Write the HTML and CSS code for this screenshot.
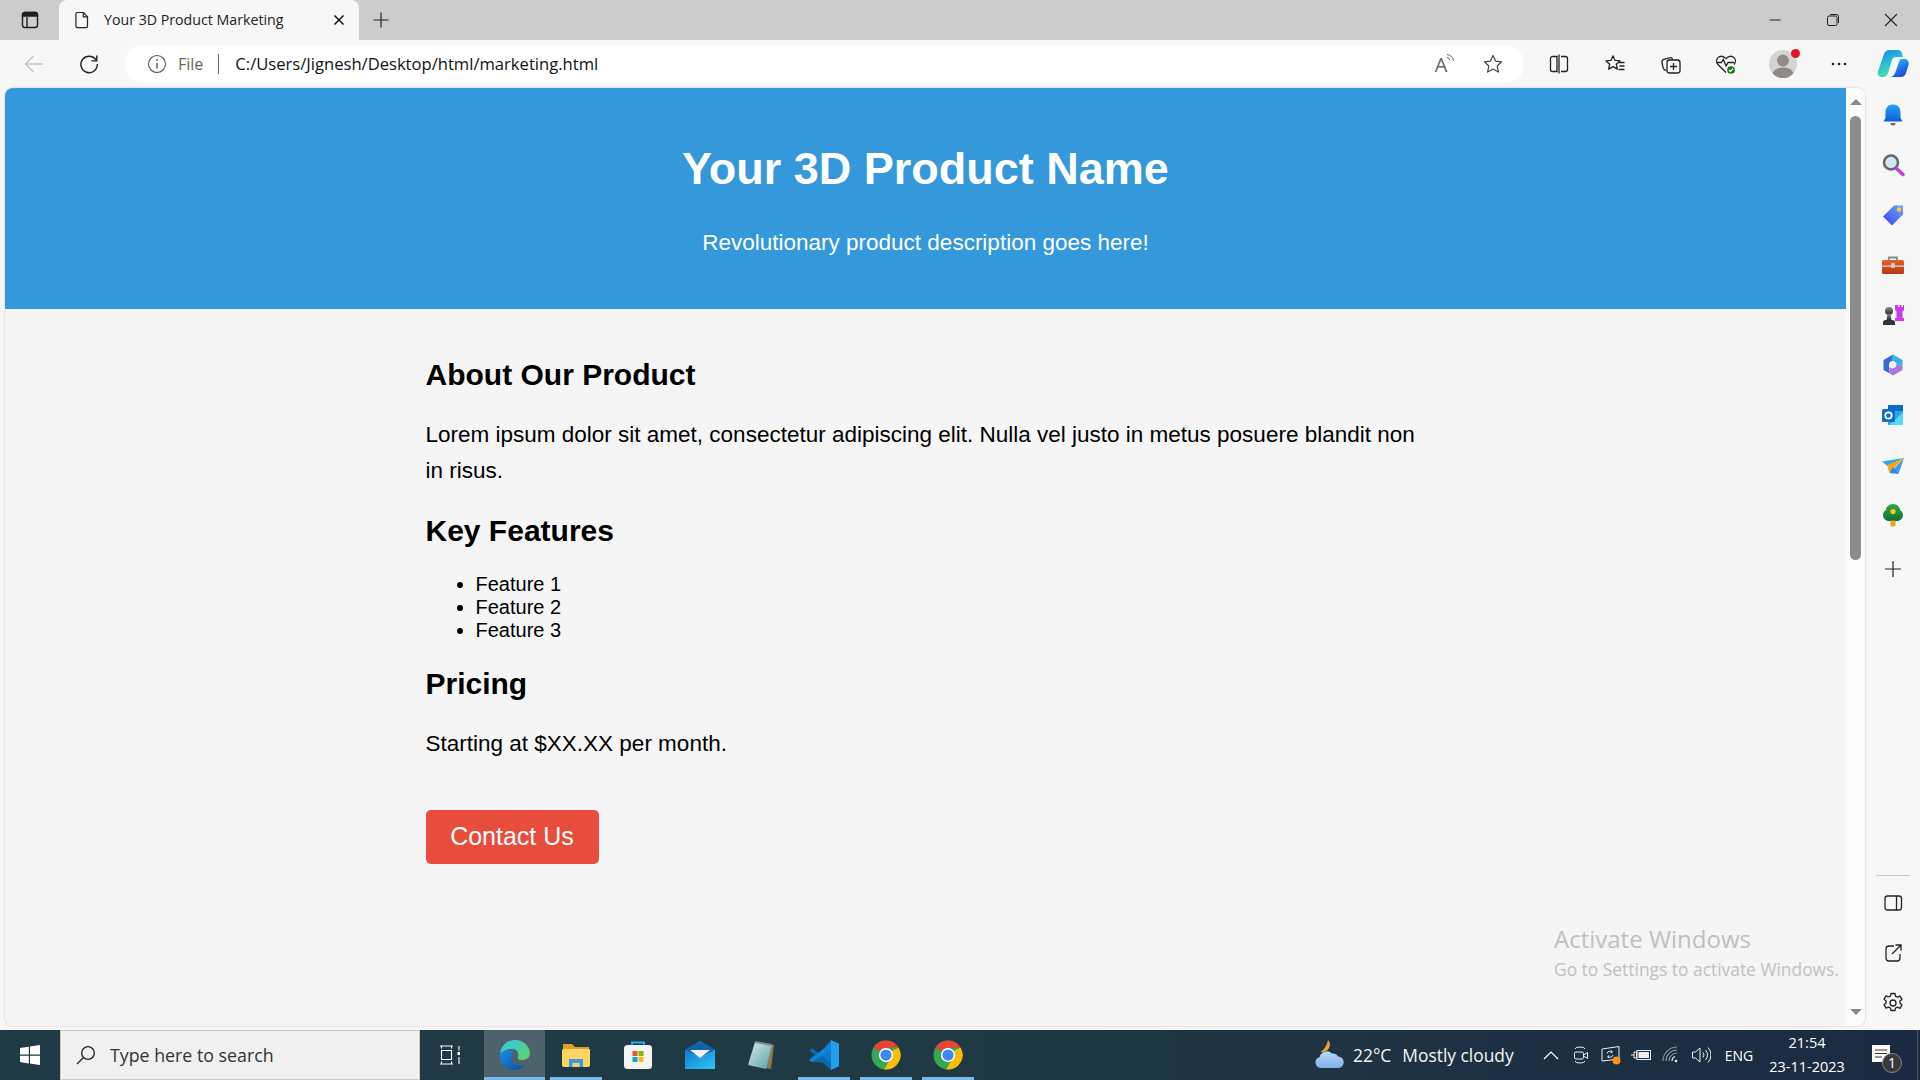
FILE: index.html
```html
<!DOCTYPE html>
<html lang="en">
<head>
<meta charset="utf-8">
<title>Your 3D Product Marketing</title>
<link rel="stylesheet" href="styles.css">
</head>
<body>
<svg class="defs" width="0" height="0" aria-hidden="true">
  <defs>
    <linearGradient id="bellG" x1="0" y1="0" x2="0" y2="1"><stop offset="0" stop-color="#2aa0f0"/><stop offset="1" stop-color="#0b5fd8"/></linearGradient>
    <linearGradient id="tagG" x1="0" y1="1" x2="1" y2="0"><stop offset="0" stop-color="#3a3ff0"/><stop offset="1" stop-color="#6aa8f8"/></linearGradient>
    <linearGradient id="boxG" x1="0" y1="0" x2="0" y2="1"><stop offset="0" stop-color="#e0622c"/><stop offset="1" stop-color="#b53a12"/></linearGradient>
    <linearGradient id="pawnG" x1="0" y1="0" x2="0" y2="1"><stop offset="0" stop-color="#8a8a8a"/><stop offset="1" stop-color="#2b2b2b"/></linearGradient>
    <linearGradient id="treeG" x1="0" y1="0" x2="0" y2="1"><stop offset="0" stop-color="#30a84a"/><stop offset="1" stop-color="#0f6e34"/></linearGradient>
    <linearGradient id="copA" x1="0" y1="0" x2="0.4" y2="1"><stop offset="0" stop-color="#1c80e8"/><stop offset=".55" stop-color="#28c0d8"/><stop offset="1" stop-color="#50e0a0"/></linearGradient>
    <linearGradient id="copB" x1="0.2" y1="0" x2="0.8" y2="1"><stop offset="0" stop-color="#30c8f0"/><stop offset=".6" stop-color="#1a70e8"/><stop offset="1" stop-color="#2040d0"/></linearGradient>
    <linearGradient id="edgeA" x1="0" y1="0" x2="1" y2="1"><stop offset="0" stop-color="#36c8e8"/><stop offset="1" stop-color="#5fd06a"/></linearGradient>
    <linearGradient id="edgeB" x1="0" y1="0" x2="1" y2="1"><stop offset="0" stop-color="#1b8ee0"/><stop offset="1" stop-color="#0c4ea0"/></linearGradient>
    <linearGradient id="mailG" x1="0" y1="0" x2="1" y2="1"><stop offset="0" stop-color="#0f78d0"/><stop offset="1" stop-color="#2ec8f4"/></linearGradient>
    <linearGradient id="noteG" x1="0" y1="0" x2="1" y2="1"><stop offset="0" stop-color="#d8ece8"/><stop offset="1" stop-color="#58a0a8"/></linearGradient>
    <linearGradient id="cloudG" x1="0" y1="0" x2="0" y2="1"><stop offset="0" stop-color="#b8d8f8"/><stop offset="1" stop-color="#7fb0e8"/></linearGradient>
  </defs>
</svg>
<div class="window">
  <header class="tabstrip">
    <span class="strip-btn">
      <svg class="ic20" viewBox="0 0 20 20" fill="none" stroke="#1f1f1f" stroke-width="1.4"><rect x="2.5" y="2.5" width="15" height="15" rx="2.5"/><path d="M7 7v10.5" /><path d="M2.5 6h15V5a2.5 2.5 0 0 0-2.5-2.5H5A2.5 2.5 0 0 0 2.5 5z" fill="#1f1f1f"/></svg>
    </span>
    <div class="tab">
      <svg class="ic20" viewBox="0 0 20 20" fill="none" stroke="#222" stroke-width="1.2"><path d="M5.5 2.5h6l4 4.2v9.3a1.6 1.6 0 0 1-1.6 1.6H5.5A1.6 1.6 0 0 1 3.9 16V4.100A1.600 1.600 0 0 1 5.500 2.500z"/><path d="M11.300 2.700v4.200h4.200"/></svg>
      <span class="tab-title">Your 3D Product Marketing</span>
      <svg class="tab-close" viewBox="0 0 12 12" fill="none" stroke="#111" stroke-width="1.5"><path d="M1.500 1.500l9 9M10.500 1.500l-9 9"/></svg>
    </div>
    <span class="new-tab">
      <svg class="ic18" viewBox="0 0 18 18" fill="none" stroke="#222" stroke-width="1.2"><path d="M9 1.500v15M1.500 9h15"/></svg>
    </span>
    <div class="win-controls">
      <span class="win-btn"><svg class="ic14" viewBox="0 0 14 14" fill="none" stroke="#222" stroke-width="1"><path d="M1.500 7h11"/></svg></span>
      <span class="win-btn"><svg class="ic14" viewBox="0 0 14 14" fill="none" stroke="#222" stroke-width="1"><rect x="1.500" y="3" width="9.500" height="9.500" rx="1.500"/><path d="M4 1.500h6.500a2 2 0 0 1 2 2V10"/></svg></span>
      <span class="win-btn"><svg class="ic14" viewBox="0 0 14 14" fill="none" stroke="#222" stroke-width="1.100"><path d="M1 1l12 12M13 1L1 13"/></svg></span>
    </div>
  </header>

  <nav class="toolbar">
    <span class="nav-btn">
      <svg class="ic22" viewBox="0 0 22 22" fill="none" stroke="#c4c4c4" stroke-width="1.400"><path d="M20 11H2.500M10.500 3L2.500 11l8 8"/></svg>
    </span>
    <span class="nav-btn">
      <svg class="ic22" viewBox="0 0 22 22" fill="none" stroke="#222" stroke-width="1.400"><path d="M18.300 7.500A8.200 8.200 0 1 0 19.300 11"/><path d="M18.800 2.500v5.400h-5.400"/></svg>
    </span>
    <div class="address">
      <svg class="ic20" viewBox="0 0 20 20" fill="none" stroke="#555" stroke-width="1.100"><circle cx="10" cy="10" r="8.500"/><path d="M10 9v5.500" stroke-width="1.400"/><circle cx="10" cy="6" r=".9" fill="#555" stroke="none"/></svg>
      <span class="addr-file">File</span>
      <span class="addr-sep"></span>
      <span class="addr-url">C:/Users/Jignesh/Desktop/html/marketing.html</span>
      <span class="addr-end">
        <span class="addr-action"><span class="read-a">A</span><svg class="read-waves" viewBox="0 0 10 12" fill="none" stroke="#666" stroke-width="1"><path d="M1 4.500a3.500 3.500 0 0 1 3 3M1 1.500a7 7 0 0 1 6.500 6.500"/></svg></span>
        <span class="addr-action"><svg class="ic22" viewBox="0 0 22 22" fill="none" stroke="#444" stroke-width="1.200"><path d="M11 2.500l2.600 5.600 6 .7-4.400 4.200 1.200 6.100L11 16.100l-5.400 3 1.200-6.100L2.400 8.800l6-.7z" stroke-linejoin="round"/></svg></span>
      </span>
    </div>
    <div class="tool-right">
      <span class="tool"><svg class="ic22" viewBox="0 0 22 22" fill="none" stroke="#222" stroke-width="1.300"><path d="M9 3.500H4.500a2 2 0 0 0-2 2v11a2 2 0 0 0 2 2H9zM13 3.500h4.500a2 2 0 0 1 2 2v11a2 2 0 0 1-2 2H13M11 1.500v19"/></svg></span>
      <span class="tool"><svg class="ic22" viewBox="0 0 22 22" fill="none" stroke="#222" stroke-width="1.300"><path d="M9 2.800l2 4.600 5 .5-3.700 3.300 1.100 4.900L9 13.600l-4.400 2.500 1.100-4.900L2 7.900l5-.5z" stroke-linejoin="round"/><path d="M15 9.500h5.500M15.500 13h5M14.500 16.500h6"/></svg></span>
      <span class="tool"><svg class="ic22" viewBox="0 0 22 22" fill="none" stroke="#222" stroke-width="1.300"><rect x="7" y="7" width="13" height="13" rx="2.500"/><path d="M13.500 10v7M10 13.500h7M6 17.500c-1.600-.4-2.500-1.400-2.900-2.900L2 9.500C1.700 8 2.500 6.700 4 6.300l5.500-1.500c1.300-.3 2.600.3 3.200 1.800"/></svg></span>
      <span class="tool"><svg class="ic24" viewBox="0 0 24 24" fill="none" stroke="#222" stroke-width="1.300"><path d="M12 20.500l-8-8C2.200 10.500 2 7.500 4 5.600c2.300-1.900 5.500-1.500 8 1 2.500-2.500 5.700-2.900 8-1 2 1.900 1.800 4.900 0 6.900"/><path d="M2.500 10.500h5l1.800-3 2.800 6.500 2-3.500h6"/><circle cx="17" cy="18" r="4.500" fill="#107c10" stroke="#f7f7f7"/><path d="M15 18l1.500 1.500 2.500-2.800" stroke="#fff"/></svg></span>
      <span class="tool">
        <span class="avatar">
          <svg class="ic28" viewBox="0 0 28 28"><circle cx="14" cy="14" r="14" fill="#d6d4d1"/><circle cx="14" cy="10.500" r="6" fill="#8e8b88"/><path d="M3.600 23.500C5 19 9 17.500 14 17.500s9 1.500 10.400 6A14 14 0 0 1 3.600 23.500z" fill="#8e8b88"/></svg>
          <span class="avatar-dot"></span>
        </span>
      </span>
      <span class="tool"><svg class="ic18" viewBox="0 0 18 18" fill="#222"><circle cx="3" cy="9" r="1.300"/><circle cx="9" cy="9" r="1.300"/><circle cx="15" cy="9" r="1.300"/></svg></span>
      <span class="tool"><svg class="ic32" viewBox="0 0 32 32"><path d="M12 2h9c2 0 3 1 3.600 2.600L26 9h-7c-2 0-3.400 1-4 3l-4 13c-.6 2-2 4-5 4H5c-3 0-5-2.500-4-5.500L7 6c1-2.500 3-4 5-4z" fill="url(#copA)"/><path d="M13 29h11c2.500 0 4-1.400 4.800-3.500L31.500 17c1-3-1-6-4-6H23l-4.500 13c-.6 2-2.500 5-5.500 5z" fill="url(#copB)"/></svg></span>
    </div>
  </nav>

  <div class="workspace">
    <div class="panel">
      <div class="page">
        <section class="hero">
          <h1 class="hero-title">Your 3D Product Name</h1>
          <p class="hero-sub">Revolutionary product description goes here!</p>
        </section>
        <main class="content">
          <h2 class="heading">About Our Product</h2>
          <p class="para">Lorem ipsum dolor sit amet, consectetur adipiscing elit. Nulla vel justo in metus posuere blandit non in risus.</p>
          <h2 class="heading">Key Features</h2>
          <ul class="features">
            <li>Feature 1</li>
            <li>Feature 2</li>
            <li>Feature 3</li>
          </ul>
          <h2 class="heading">Pricing</h2>
          <p class="para">Starting at $XX.XX per month.</p>
          <a class="cta">Contact Us</a>
        </main>
        <div class="watermark">
          <div class="wm-title">Activate Windows</div>
          <div class="wm-sub">Go to Settings to activate Windows.</div>
        </div>
      </div>
      <div class="scrollbar">
        <span class="arrow-up"></span>
        <span class="thumb"></span>
        <span class="arrow-down"></span>
      </div>
    </div>
    <aside class="sidebar">
      <span class="side-ic"><svg class="ic24" viewBox="0 0 24 24"><path d="M12 1.500c-5 0-7.500 3.300-7.500 8v5.500L2.500 18.500h19L19.500 15V9.500c0-4.700-2.500-8-7.500-8z" fill="url(#bellG)"/><path d="M9.500 20h5a2.500 2.500 0 0 1-5 0z" fill="#666"/></svg></span>
      <span class="side-ic"><svg class="ic24" viewBox="0 0 24 24" fill="none"><circle cx="10" cy="9.500" r="7" fill="#cfe6f8" stroke="#666" stroke-width="2.600"/><path d="M15.500 15.500l6.500 6" stroke="#c83cf0" stroke-width="3.400" stroke-linecap="round"/></svg></span>
      <span class="side-ic"><svg class="ic24" viewBox="0 0 24 24"><path d="M13 2.500h9v9L11 22.500 2 13.500z" fill="url(#tagG)"/><circle cx="18" cy="6.500" r="2.200" fill="#ffc83d"/></svg></span>
      <span class="side-ic"><svg class="ic24" viewBox="0 0 24 24"><path d="M8 7V4.500h8V7" fill="none" stroke="#888" stroke-width="1.800"/><rect x="1" y="7" width="22" height="14" rx="1.500" fill="url(#boxG)"/><rect x="1" y="12.500" width="22" height="1.200" fill="#f4d8c8"/><rect x="10" y="10" width="4" height="5" rx="1" fill="#ccc"/></svg></span>
      <span class="side-ic"><svg class="ic24" viewBox="0 0 24 24"><path d="M15 2h2v2h1.500V2h2v2H22V2h1v5l-1.500 1.500V15H23v3h-9v-3h1.500V8.500L14 7V2z" fill="#c83cf0"/><circle cx="8" cy="8" r="4" fill="url(#pawnG)"/><path d="M6.500 11h3l1 6h-5z" fill="url(#pawnG)"/><path d="M2 22v-2.500c0-1.500 1-2.500 2.500-2.500h7c1.500 0 2.500 1 2.500 2.500V22z" fill="#333"/></svg></span>
      <span class="side-ic"><svg class="ic24" viewBox="0 0 24 24"><path d="M12 1.500L21.500 7v6l-6-1.500A4 4 0 0 0 11 8z" fill="#38b0e8"/><path d="M12 1.500L2.500 7v10L8 20v-8a4 4 0 0 1 3-4z" fill="#3a68d8"/><path d="M21.500 13v4L12 22.500 8 20l.5-6a4 4 0 0 0 7-2.500z" fill="#a878dc"/></svg></span>
      <span class="side-ic"><svg class="ic24" viewBox="0 0 24 24"><path d="M7 2h15v20H7z" fill="#28a8ea"/><path d="M7 2h15v6H7z" fill="#0a6cc4"/><path d="M22 9.500V22H8z" fill="#50d9ff"/><rect x="1" y="6" width="13" height="13" rx="1.500" fill="#0f6cc8"/><circle cx="7.500" cy="12.500" r="3.200" fill="none" stroke="#fff" stroke-width="1.800"/></svg></span>
      <span class="side-ic"><svg class="ic24" viewBox="0 0 24 24"><path d="M1 8.500L23 5 9 15z" fill="#28a8ea"/><path d="M23 5l-5.500 16-5-4.500z" fill="#3c9cf0"/><path d="M6 12L23 5 8.500 20z" fill="#f5a623"/><path d="M8.500 20l3.500-6 5.500 7z" fill="#2b88e0"/></svg></span>
      <span class="side-ic"><svg class="ic24" viewBox="0 0 24 24"><path d="M12 1c-4 0-7 3-7 6-2 1-3 3-3 5 0 3.500 3 6 6 6h8c3 0 6-2.500 6-6 0-2-1-4-3-5 0-3-3-6-7-6z" fill="url(#treeG)"/><rect x="9.500" y="17.500" width="5" height="6" rx="1" fill="#e8a020"/><circle cx="12" cy="8.500" r="2.600" fill="#f8c820"/></svg></span>
      <span class="side-ic side-add"><svg class="ic18" viewBox="0 0 18 18" fill="none" stroke="#222" stroke-width="1.200"><path d="M9 1v16M1 9h16"/></svg></span>
      <span class="side-spacer"></span>
      <span class="side-rule"></span>
      <span class="side-ic"><svg class="ic20" viewBox="0 0 20 20" fill="none" stroke="#222" stroke-width="1.300"><rect x="2" y="3" width="16.500" height="14" rx="2.500"/><path d="M13.500 3v14"/></svg></span>
      <span class="side-ic"><svg class="ic20" viewBox="0 0 20 20" fill="none" stroke="#222" stroke-width="1.300"><path d="M11 3H6a3 3 0 0 0-3 3v9a3 3 0 0 0 3 3h8a3 3 0 0 0 3-3v-4"/><path d="M9 11l9-9M12.500 2H18v5.500"/></svg></span>
      <span class="side-ic"><svg class="ic22" viewBox="0 0 22 22" fill="none" stroke="#222" stroke-width="1.300"><circle cx="11" cy="11" r="3"/><path d="M9 1.500h4l.6 2.800 1.900.9 2.500-1.200 2 3.400-2.100 1.700v2l2.100 1.800-2 3.400-2.500-1.200-1.900.9-.6 2.500H9l-.6-2.500-1.900-.9L4 16.100l-2-3.400 2.100-1.800v-2L2 7.200l2-3.400 2.500 1.200 1.900-.9z" stroke-linejoin="round"/></svg></span>
    </aside>
  </div>

  <footer class="taskbar">
    <span class="start"><svg class="ic20" viewBox="0 0 20 20" fill="#fff"><path d="M0 3l8.800-1.300v7.800H0zM10 1.500L20 0v9.500H10zM0 10.700h8.800v7.700L0 17zM10 10.700h10V20l-10-1.500z"/></svg></span>
    <div class="search">
      <svg class="ic20" viewBox="0 0 20 20" fill="none" stroke="#222" stroke-width="1.300"><circle cx="12" cy="8" r="6.300"/><path d="M7.500 12.500L1 19"/></svg>
      <span class="search-text">Type here to search</span>
    </div>
    <span class="task-view"><svg class="ic20" viewBox="0 0 20 20" fill="none" stroke="#fff" stroke-width="1.100"><path d="M0 1h13M0 19h13M1.500 5.500h10v9h-10zM1.500 1v2.500M11.500 1v2.500M1.500 16.500V19M11.500 16.500V19"/><path d="M19 1v4.500M19 12v7"/><rect x="17.500" y="7" width="3" height="3" fill="#fff" stroke="none"/></svg></span>
    <span class="app app-active on">
      <svg class="ic32" viewBox="0 0 32 32"><path d="M1 15C2 7 8 1 16 1c9 0 15 7 15 13 0 5-4 7-8 7-3 0-5-1-4-3 1-3 0-8-6-8-6 0-10 3-12 5z" fill="url(#edgeA)"/><path d="M1 15c-1 8 5 16 14 16 5 0 9-2 12-5-4 1-10 1-13-3-3-4-1-10 2-11-7-2-13 0-15 3z" fill="url(#edgeB)"/></svg>
    </span>
    <span class="app on">
      <svg class="ic30" viewBox="0 0 30 30"><path d="M2 4h9l3 3h14v6H2z" fill="#dda020"/><path d="M2 9h26a1 1 0 0 1 1 1v15a2 2 0 0 1-2 2H3a2 2 0 0 1-2-2V10z" fill="#fcd565"/><path d="M8 27v-8h14v8h-3.500v-4h-7v4z" fill="#3c98e0"/></svg>
    </span>
    <span class="app">
      <svg class="ic30" viewBox="0 0 30 30"><path d="M9 6V2.500h12V6" fill="none" stroke="#30b0f0" stroke-width="1.800"/><rect x="1" y="5" width="28" height="24" rx="3.500" fill="#f4f4f4"/><rect x="9.500" y="11" width="5" height="5" fill="#f25022"/><rect x="15.500" y="11" width="5" height="5" fill="#7fba00"/><rect x="9.500" y="17" width="5" height="5" fill="#00a4ef"/><rect x="15.500" y="17" width="5" height="5" fill="#ffb900"/></svg>
    </span>
    <span class="app">
      <svg class="ic30" viewBox="0 0 30 30"><path d="M15 1l15 9v19H0V10z" fill="url(#mailG)"/><path d="M15 1l15 9-15 7-15-7z" fill="#0e62b0"/><path d="M5 10h20l-10 8z" fill="#f4f4f4"/><path d="M0 10l15 10 15-10v19H0z" fill="url(#mailG)"/></svg>
    </span>
    <span class="app">
      <svg class="ic30" viewBox="0 0 30 30"><path d="M10 2l17 3-3 24-5-1z" fill="#8a7a50"/><path d="M8 2l17 3-6 24-18-4z" fill="url(#noteG)"/><path d="M8 2l17 3" stroke="#888" stroke-width="2"/></svg>
    </span>
    <span class="app on">
      <svg class="ic32" viewBox="0 0 32 32"><path d="M23 1l8 4v22l-8 4-14-13z" fill="#0c78c8"/><path d="M23 1v30l8-4V5z" fill="#24a0ea"/><path d="M1 11l3-2 19 15v7l-8-7.500L4 23l-3-2 6-5z" fill="#0a68b0"/><path d="M1 21l22-17v7L4 23z" fill="#0f84d8"/></svg>
    </span>
    <span class="app on">
      <svg class="ic30" viewBox="0 0 32 32"><circle cx="16" cy="16" r="15.500" fill="#34a853"/><path d="M16 .5A15.500 15.500 0 0 1 29.400 8.200H16a7.800 7.800 0 0 0-7 4.400L3 8A15.500 15.500 0 0 1 16 .5z" fill="#ea4335"/><path d="M29.400 8.200A15.500 15.500 0 0 1 14 31.400l6.600-11.500A7.800 7.800 0 0 0 22 11.800z" fill="#fbbc05"/><circle cx="16" cy="16" r="7.600" fill="#fff"/><circle cx="16" cy="16" r="6" fill="#4285f4"/></svg>
    </span>
    <span class="app on">
      <svg class="ic30" viewBox="0 0 32 32"><circle cx="16" cy="16" r="15.500" fill="#34a853"/><path d="M16 .5A15.500 15.500 0 0 1 29.400 8.200H16a7.800 7.800 0 0 0-7 4.400L3 8A15.500 15.500 0 0 1 16 .5z" fill="#ea4335"/><path d="M29.400 8.200A15.500 15.500 0 0 1 14 31.400l6.600-11.500A7.800 7.800 0 0 0 22 11.800z" fill="#fbbc05"/><circle cx="16" cy="16" r="7.600" fill="#fff"/><circle cx="16" cy="16" r="6" fill="#4285f4"/></svg>
    </span>
    <div class="weather">
      <svg class="ic32" viewBox="0 0 32 32"><path d="M14 1a7 7 0 0 1 1 8 7 7 0 0 1-9 3.500C9 12 12.500 8 14 1z" fill="#f0a030"/><path d="M7 29a5.500 5.500 0 0 1-1.500-10.800A7.500 7.500 0 0 1 18 14.500a6 6 0 0 1 6 3 5.800 5.800 0 0 1 1 11.500z" fill="url(#cloudG)"/></svg>
      <span class="weather-temp">22°C</span>
      <span class="weather-text">Mostly cloudy</span>
    </div>
    <span class="tray"><svg class="ic18" viewBox="0 0 18 18" fill="none" stroke="#fff" stroke-width="1.200"><path d="M2 13l7-7 7 7"/></svg></span>
    <span class="tray"><svg class="ic18" viewBox="0 0 18 18" fill="none" stroke="#eee" stroke-width="1"><path d="M3 3q0-2 5-2t5 2M3 15q0 2 5 2t5-2"/><rect x="2.500" y="6" width="9" height="7" rx="1.500"/><path d="M11.500 9l4-2.500v6l-4-2.500"/></svg></span>
    <span class="tray"><svg class="ic20" viewBox="0 0 20 20" fill="none" stroke="#eee" stroke-width="1"><path d="M1 4l17-2.500V14L1 16z"/><path d="M6 8.500a3 3 0 0 1 5-1.500M12 10a3 3 0 0 1-5 1.500M10.500 5.500l.8 1.700-1.800.5M7.500 13l-.8-1.700 1.800-.5"/><circle cx="15.500" cy="15.500" r="4" fill="#f7931e" stroke="none"/></svg></span>
    <span class="tray"><svg class="ic20" viewBox="0 0 20 20" fill="none" stroke="#eee" stroke-width="1"><path d="M0 10h3M3 7h2.500v6H3zM5.500 8.500h1"/><rect x="6" y="5.500" width="13.500" height="9"/><rect x="7.500" y="7" width="10.500" height="6" fill="#eee" stroke="none"/></svg></span>
    <span class="tray"><svg class="ic18" viewBox="0 0 18 18" fill="none" stroke="#8b96a3" stroke-width="1.100"><path d="M1 15a14 14 0 0 1 14-14M4 15a11 11 0 0 1 11-11M7 15a8 8 0 0 1 8-8" /><path d="M10 15a5 5 0 0 1 3-4.500" stroke="#eee"/><circle cx="14" cy="15" r="1.300" fill="#eee" stroke="none"/></svg></span>
    <span class="tray"><svg class="ic20" viewBox="0 0 20 20" fill="none" stroke="#eee" stroke-width="1"><path d="M1.500 7v6h3l4.500 4V3L4.500 7z"/><path d="M12 7.500a4 4 0 0 1 0 5M14.500 5a7.500 7.500 0 0 1 0 10M17 2.500a11 11 0 0 1 0 15"/></svg></span>
    <span class="lang">ENG</span>
    <span class="clock"><span>21:54</span><span>23-11-2023</span></span>
    <span class="notify">
      <svg class="ic22" viewBox="0 0 22 22"><path d="M2 1h18v17H2z" fill="#fff"/><path d="M5 6h12M5 9.500h12M5 13h7" stroke="#333" stroke-width="1.200"/></svg>
      <span class="notify-badge">1</span>
    </span>
    <span class="show-desktop"></span>
  </footer>
</div>
</body>
</html>
```
FILE: styles.css
```css
* { box-sizing: border-box; }
html, body { margin: 0; height: 100%; overflow: hidden; }
body { font-family: "Liberation Sans", Arial, sans-serif; background: #f7f7f7; }
.defs { position: absolute; }
svg { display: block; flex: none; }
.ic14 { width: 14px; height: 14px; }
.ic18 { width: 18px; height: 18px; }
.ic20 { width: 20px; height: 20px; }
.ic22 { width: 22px; height: 22px; }
.ic24 { width: 24px; height: 24px; }
.ic28 { width: 28px; height: 28px; }
.ic30 { width: 30px; height: 30px; }
.ic32 { width: 32px; height: 32px; }

.window { display: flex; flex-direction: column; width: 1920px; height: 1080px; }

/* tab strip */
.tabstrip { display: flex; align-items: stretch; height: 40px; background: #cccccc; font-family: "Open Sans", "Noto Sans", sans-serif; }
.strip-btn { display: flex; align-items: center; justify-content: center; width: 59px; }
.tab { display: flex; align-items: center; width: 300px; background: #f7f7f7; border-radius: 8px 8px 0 0; padding-left: 13px; }
.tab-title { margin: 0 0 2px 12px; font-size: 14.2px; color: #222; white-space: nowrap; flex: 1; }
.tab-close { width: 12px; height: 12px; margin-right: 14px; }
.new-tab { display: flex; align-items: center; justify-content: center; width: 44px; }
.win-controls { display: flex; margin-left: auto; }
.win-btn { display: flex; align-items: center; justify-content: center; width: 58px; }

/* toolbar */
.toolbar { display: flex; align-items: center; height: 48px; padding-left: 12px; background: #f7f7f7; font-family: "Open Sans", "Noto Sans", sans-serif; }
.nav-btn { display: flex; align-items: center; justify-content: center; width: 44px; margin-right: 11px; }
.address { display: flex; align-items: center; width: 1399px; height: 38px; margin-left: 3px; padding-left: 22px; background: #fff; border-radius: 19px; }
.addr-file { margin-left: 11px; font-size: 16px; color: #666; }
.addr-sep { width: 1px; height: 20px; margin: 0 16px 0 15px; background: #666; }
.addr-url { margin-bottom: 2px; font-size: 16.6px; color: #111; white-space: nowrap; }
.addr-end { display: flex; margin-left: auto; margin-right: 19px; gap: 26px; }
.addr-action { display: flex; align-items: center; justify-content: center; position: relative; width: 24px; height: 24px; }
.read-a { font-size: 20px; color: #666; margin-right: 4px; }
.read-waves { position: absolute; right: -1px; top: 1px; width: 10px; height: 12px; }
.tool-right { display: grid; grid-template-columns: 56px 56px 55px 55px 60px 52px 55px; margin-left: 7px; }
.tool { display: flex; align-items: center; justify-content: center; height: 40px; }
.avatar { position: relative; display: block; }
.avatar-dot { position: absolute; top: -1px; right: -3px; width: 9px; height: 9px; border-radius: 50%; background: #e81123; }

/* page area */
.workspace { display: flex; flex: 1; min-height: 0; background: #f7f7f7; }
.panel { display: flex; flex: none; width: 1860px; margin: 0 0 4px 5px; border-radius: 8px; overflow: hidden; box-shadow: 0 0 2px rgba(0,0,0,.25); }
.page { position: relative; flex: 1; min-width: 0; background: #f5f5f5; color: #000; }
.hero { height: 221px; padding-top: 25px; background: #3498db; color: #fff; text-align: center; }
.hero-title { margin: 30px 0 0; font-size: 45px; font-weight: 700; }
.hero-sub { margin: 34.5px 0 0; font-size: 22.5px; }
.content { width: 1000px; margin: 0 auto; padding-top: 23.5px; }
.heading { margin: 25px 0; font-size: 30px; font-weight: 700; }
.para { margin: 25px 0; font-size: 22.5px; line-height: 36px; }
.features { margin: 25px 0; padding-left: 50px; font-size: 20px; }
.cta { display: block; width: 173px; margin-top: 48px; padding: 12.500px 0; background: #e74c3c; border-radius: 5px; color: #fff; font-size: 25px; text-align: center; }
.watermark { position: absolute; left: 1549px; top: 833px; font-family: "Open Sans", "Noto Sans", sans-serif; color: #c0c0c0; white-space: nowrap; }
.wm-title { font-size: 24px; line-height: 36px; }
.wm-sub { font-size: 17.4px; line-height: 24px; }

.scrollbar { display: flex; flex-direction: column; align-items: center; width: 19px; padding: 11px 0 11px; background: #fcfcfc; }
.arrow-up, .arrow-down { width: 0; height: 0; border-left: 6px solid transparent; border-right: 6px solid transparent; }
.arrow-up { border-bottom: 6px solid #8a8a8a; }
.arrow-down { margin-top: auto; border-top: 6px solid #8a8a8a; }
.thumb { width: 11px; height: 444px; margin-top: 11px; border-radius: 6px; background: #8c8c8c; }

/* sidebar */
.sidebar { display: flex; flex: 1; flex-direction: column; align-items: center; padding: 2px 0 2px; }
.side-ic { display: flex; align-items: center; justify-content: center; height: 50px; width: 100%; }
.side-add { margin-top: 4px; }
.side-spacer { flex: 1; }
.side-rule { width: 34px; height: 1px; background: #c8c8c8; margin-bottom: 2px; }

/* taskbar */
.taskbar { display: flex; align-items: stretch; height: 50px; background: linear-gradient(90deg, #203a45 0%, #203a45 45%, #1b2a42 100%); color: #fff; font-family: "Open Sans", "Noto Sans", sans-serif; }
.start { display: flex; align-items: center; justify-content: center; width: 60px; }
.search { display: flex; align-items: center; width: 360px; padding-left: 15px; background: #f0f0f0; border: 1px solid #c8c8c8; }
.search-text { margin-left: 14px; font-size: 17.8px; color: #333; }
.task-view { display: flex; align-items: center; justify-content: center; width: 64px; padding-right: 5px; }
.app { display: flex; align-items: center; justify-content: center; position: relative; width: 62px; }
.app-active { width: 61px; background: #4e626c; }
.app.on::after { content: ""; position: absolute; left: 5px; right: 5px; bottom: 0; height: 3px; background: #76b9ed; }
.app-active.on::after { left: 0; right: 0; }
.weather { display: flex; align-items: center; width: 226px; margin-left: auto; padding-left: 4px; font-size: 17.4px; color: #f4f4f4; white-space: nowrap; }
.weather-temp { margin-left: 7px; }
.weather-text { margin-left: 11px; }
.tray { display: flex; align-items: center; justify-content: center; width: 30px; }
.lang { display: flex; align-items: center; justify-content: center; width: 46px; font-size: 14px; }
.clock { display: flex; flex-direction: column; align-items: center; justify-content: center; width: 90px; font-size: 14.5px; line-height: 24px; }
.notify { display: flex; align-items: center; justify-content: center; position: relative; width: 58px; }
.notify-badge { position: absolute; left: 30px; top: 23px; width: 20px; height: 20px; border: 1px solid #888; border-radius: 50%; background: #3a3a3a; font-size: 14px; line-height: 18px; text-align: center; }
.show-desktop { flex: none; width: 3px; margin-left: 7px; border-left: 1px solid #555; }
```
